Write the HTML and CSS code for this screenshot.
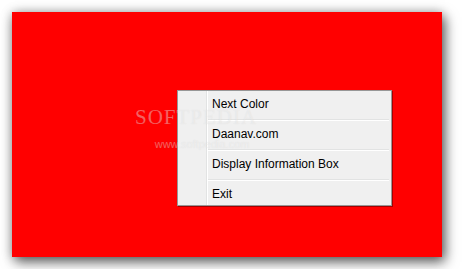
FILE: index.html
```html
<!DOCTYPE html>
<html lang="en">
<head>
  <meta charset="UTF-8" />
  <title>Color Window</title>
  <link rel="stylesheet" href="styles.css">
</head>
<body>
  <div class="window">
    <!-- Context menu -->
    <div class="menu">
      <div class="item">Next Color</div>
      <div class="sep"></div>
      <div class="item">Daanav.com</div>
      <div class="sep"></div>
      <div class="item">Display Information Box</div>
      <div class="sep"></div>
      <div class="item last">Exit</div>
    </div>

    <!-- Watermark -->
    <div class="mark">
      <div class="mark-big">SOFTPEDIA</div>
      <div class="mark-small">www.softpedia.com</div>
    </div>
  </div>
</body>
</html>
```

FILE: styles.css
```css
body {
  margin: 0;
  padding: 12px;
  background: #fff;
  font-family: "Liberation Sans", Arial, sans-serif;
}

.window {
  position: relative;
  width: 430px;
  height: 245px;
  background: #ff0000;
  box-shadow: 3px 5px 12px rgba(0, 0, 0, 0.6), 0 0 10px rgba(0, 0, 0, 0.25);
}

.menu {
  position: absolute;
  left: 165px;
  top: 78px;
  width: 213px;
  height: 114px;
  border: 1px solid #979797;
  background: #f0f0f0;
  box-shadow: 1px 1px 0 rgba(0, 0, 0, 0.35);
  background-image: linear-gradient(to right, transparent 28px, #e2e3e3 28px, #e2e3e3 29px, #fff 29px, #fff 30px, transparent 30px);
}

.item {
  height: 28px;
  line-height: 26px;
  padding-left: 34px;
  font-size: 12px;
  color: #000;
}

.item.last {
  height: 24px;
}

.sep {
  height: 1px;
  margin-left: 30px;
  margin-right: 2px;
  background: #e2e3e3;
  border-bottom: 1px solid #fff;
}

.mark {
  position: absolute;
  left: 123px;
  top: 93px;
  pointer-events: none;
  text-align: center;
  color: rgba(255, 255, 255, 0.35);
  text-shadow: 0 0 1px rgba(120, 120, 120, 0.15);
}

.mark-big {
  font-family: "Liberation Serif", serif;
  font-size: 21px;
  letter-spacing: 1px;
}

.mark-small {
  margin-top: 8px;
  font-size: 11px;
  padding-left: 12px;
}
```
